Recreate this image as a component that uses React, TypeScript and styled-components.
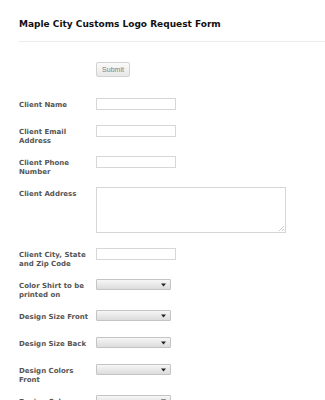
import styled, { createGlobalStyle } from "styled-components";

type Field = {
  label: string;
  kind: "text" | "area" | "select";
};

const fields: Field[] = [
  { label: "Client Name", kind: "text" },
  { label: "Client Email Address", kind: "text" },
  { label: "Client Phone Number", kind: "text" },
  { label: "Client Address", kind: "area" },
  { label: "Client City, State and Zip Code", kind: "text" },
  { label: "Color Shirt to be printed on", kind: "select" },
  { label: "Design Size Front", kind: "select" },
  { label: "Design Size Back", kind: "select" },
  { label: "Design Colors Front", kind: "select" },
  { label: "Design Colors Back", kind: "select" },
];

const GlobalStyle = createGlobalStyle`
  html, body {
    margin: 0;
    padding: 0;
    background: #fff;
  }
  body {
    font-family: "DejaVu Sans", Verdana, sans-serif;
    overflow: hidden;
  }
`;

const App: React.FC = () => {
  return (
    <Page>
      <GlobalStyle />
      <Header>
        <Title>Maple City Customs Logo Request Form</Title>
      </Header>
      <Divider />

      <SubmitRow>
        <SubmitButton type="button">Submit</SubmitButton>
      </SubmitRow>

      <FieldList>
        {fields.map(({ label, kind }) => (
          <Row key={label}>
            <Label>{label}</Label>
            {kind === "text" && <TextInput type="text" />}
            {kind === "area" && <TextArea />}
            {kind === "select" && (
              <SelectWrap>
                <Select defaultValue="">
                  <option value=""></option>
                </Select>
                <Arrow width="5" height="4" viewBox="0 0 5 4">
                  <path d="M0 0.5 L5 0.5 L2.5 3.5 Z" fill="#222" />
                </Arrow>
              </SelectWrap>
            )}
          </Row>
        ))}
      </FieldList>
    </Page>
  );
};

const Page = styled.div`
  width: 325px;
  height: 400px;
  overflow: hidden;
`;

const Header = styled.div`
  padding: 19px 0 0 19px;
`;

const Title = styled.h1`
  margin: 0;
  font-size: 9px;
  line-height: 11px;
  font-weight: bold;
  color: #111;
`;

const Divider = styled.div`
  margin: 11px 0 0 19px;
  height: 1px;
  background: #ececec;
`;

const SubmitRow = styled.div`
  display: flex;
  padding: 20px 0 0 96px;
`;

const SubmitButton = styled.button`
  height: 15px;
  width: 34px;
  padding: 0;
  border: 1px solid #d2d2d2;
  border-radius: 2px;
  background: linear-gradient(#fafafa, #e8e8e8);
  color: #808080;
  font-family: "Liberation Sans", Arial, sans-serif;
  font-size: 7px;
  line-height: 13px;
`;

const FieldList = styled.div`
  display: flex;
  flex-direction: column;
  padding: 21px 0 0 19px;
`;

const Row = styled.div`
  display: flex;
  align-items: flex-start;
  min-height: 17px;
  padding-bottom: 10px;
`;

const Label = styled.label`
  width: 72px;
  margin-right: 5px;
  padding-top: 3px;
  font-size: 7px;
  line-height: 9px;
  font-weight: bold;
  color: #555;
`;

const TextInput = styled.input`
  box-sizing: border-box;
  width: 80px;
  height: 12px;
  margin: 0;
  padding: 0 2px;
  border: 1px solid #d6d6d6;
  background: #fff;
  font-size: 7px;
`;

const TextArea = styled.textarea`
  box-sizing: border-box;
  display: block;
  width: 190px;
  height: 46px;
  margin: 0 0 5px;
  padding: 2px;
  border: 1px solid #d6d6d6;
  resize: none;
  background:
    linear-gradient(135deg, transparent 55%, #c8c8c8 55%, #c8c8c8 65%, transparent 65%, transparent 78%, #c8c8c8 78%, #c8c8c8 88%, transparent 88%)
      right 1px bottom 1px / 6px 6px no-repeat,
    #fff;
  font-size: 7px;
`;

const SelectWrap = styled.div`
  position: relative;
  width: 75px;
  height: 11px;
`;

const Select = styled.select`
  appearance: none;
  box-sizing: border-box;
  display: block;
  width: 75px;
  height: 11px;
  margin: 0;
  padding: 0;
  border: 1px solid #c4c4c4;
  border-radius: 1px;
  background: linear-gradient(#f6f6f6, #dcdcdc);
  font-size: 7px;
`;

const Arrow = styled.svg`
  position: absolute;
  right: 5px;
  top: 4px;
  pointer-events: none;
`;

export default App;
